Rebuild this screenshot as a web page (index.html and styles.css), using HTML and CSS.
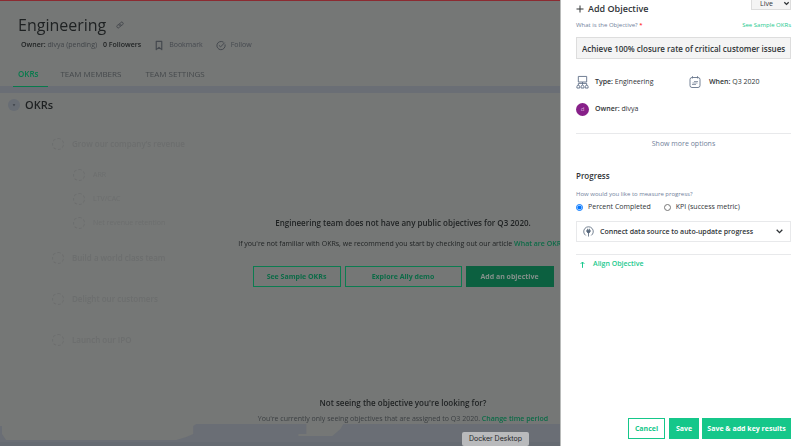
FILE: index.html
```html
<!DOCTYPE html>
<html lang="en">
<head>
<meta charset="utf-8">
<title>Engineering OKRs</title>
<link rel="stylesheet" href="styles.css">
</head>
<body>
<div class="page">
  <header class="team">
    <div class="team-title">
      <h1>Engineering</h1>
      <svg class="link-icon" viewBox="0 0 16 16" fill="none" stroke="currentColor" stroke-width="1.6" stroke-linecap="round"><path d="M7 10a3 3 0 0 1-.5-4L9.500 3a2.700 2.700 0 0 1 4 3.800L11 9.500M9 6a3 3 0 0 1 .5 4L6.500 13a2.700 2.700 0 0 1-4-3.800L5 6.500"/></svg>
    </div>
    <div class="meta">
      <span class="owner"><b>Owner:</b> divya (pending)</span>
      <b class="followers">0 Followers</b>
      <button class="meta-action" type="button"><svg viewBox="0 0 10 12" fill="none" stroke="currentColor" stroke-width="1.300" stroke-linejoin="round"><path d="M2 1.500h6v9L5 8l-3 2.500z"/></svg>Bookmark</button>
      <button class="meta-action" type="button"><svg viewBox="0 0 12 12" fill="none" stroke="currentColor" stroke-width="1.200" stroke-linecap="round"><path d="M11 5.200A5 5 0 1 1 8.700 1.800M3.800 6l1.700 1.700L10 3"/></svg>Follow</button>
    </div>
    <nav class="tabs">
      <a class="tab active" href="#okrs">OKRs</a>
      <a class="tab" href="#members">TEAM MEMBERS</a>
      <a class="tab" href="#settings">TEAM SETTINGS</a>
    </nav>
  </header>
  <main id="okrs">
    <div class="section-head">
      <button class="toggle" type="button" aria-label="Collapse OKRs"><svg viewBox="0 0 6 6"><path d="M1 2h4L3 5z" fill="currentColor"/></svg></button>
      <h2>OKRs</h2>
    </div>
    <div class="stack">
      <ul class="tree">
        <li class="goal"><i class="target"></i>Grow our company’s revenue</li>
        <li class="child first"><i class="target"></i>ARR</li>
        <li class="child"><i class="target"></i>LTV/CAC</li>
        <li class="child last"><i class="target"></i>Net revenue retention</li>
        <li class="goal"><i class="target"></i>Build a world class team</li>
        <li class="goal"><i class="target"></i>Delight our customers</li>
        <li class="goal"><i class="target"></i>Launch our IPO</li>
      </ul>
      <section class="empty">
        <h3>Engineering team does not have any public objectives for Q3 2020.</h3>
        <p class="hint">If you're not familiar with OKRs, we recommend you start by checking out our article <a href="#about">What are OKRs?</a></p>
        <div class="actions">
          <button class="ghost" type="button">See Sample OKRs</button>
          <button class="ghost wide" type="button">Explore Ally demo</button>
          <button class="solid" type="button">Add an objective</button>
        </div>
        <h3>Not seeing the objective you're looking for?</h3>
        <p class="period">You're currently only seeing objectives that are assigned to Q3 2020. <a href="#period">Change time period</a></p>
      </section>
    </div>
  </main>
  <svg class="floor" viewBox="0 0 560 22" preserveAspectRatio="none"><path d="M0 2h2v8l4 6h170l10-3 7-3V2l3-2h110v10h-8v2h34l8-7 3-5h221v22H0z" fill="#6a6e75"/><path d="M0 18h560v4H0z" fill="#666b72"/></svg>
</div>

<aside class="drawer">
  <form class="form">
    <div class="drawer-head">
      <h2><svg viewBox="0 0 8 8" stroke="currentColor" stroke-width="1"><path d="M4 .5v7M.5 4h7"/></svg>Add Objective</h2>
      <div class="select-wrap">
        <select aria-label="Status"><option>Live</option></select>
        <svg viewBox="0 0 8 8" fill="none" stroke="currentColor" stroke-width="1.500"><path d="M1.500 2.500L4 5l2.500-2.500"/></svg>
      </div>
    </div>
    <div class="label-row">
      <label for="objective">What is the Objective? <b class="req">*</b></label>
      <a href="#samples">See Sample OKRs</a>
    </div>
    <input class="objective" id="objective" type="text" value="Achieve 100% closure rate of critical customer issues">
    <div class="facts">
      <div class="fact"><svg viewBox="0 0 14 14" fill="none" stroke="currentColor" stroke-width="1"><path d="M2.500 1h9v6h-9zM7 7v3M2.500 10.500V8.500h9v2"/><path d="M1 13.500V12q0-1.500 1.500-1.500T4 12v1.500zM5.500 13.500V12q0-1.500 1.500-1.500T8.500 12v1.500zM10 13.500V12q0-1.500 1.500-1.500T13 12v1.500z"/></svg><span><b>Type:</b> Engineering</span></div>
      <div class="fact"><svg class="calendar" viewBox="0 0 12 12" fill="none" stroke="currentColor" stroke-width=".9"><rect x="1" y="1.500" width="10" height="10" rx="2"/><path d="M3.500 0v2.500M8.500 0v2.500M5 5.500h4M3.500 7h5M3 8.500h4" stroke-width=".7"/></svg><span><b>When:</b> Q3 2020</span></div>
      <div class="fact"><span class="avatar">d</span><span><b>Owner:</b> divya</span></div>
    </div>
    <button class="more" type="button">Show more options</button>
    <h3>Progress</h3>
    <fieldset>
      <legend>How would you like to measure progress?</legend>
      <div class="radios">
        <label><input type="radio" name="measure" checked>Percent Completed</label>
        <label><input type="radio" name="measure">KPI (success metric)</label>
      </div>
    </fieldset>
    <button class="connect" type="button">
      <svg viewBox="0 0 12 12" fill="none" stroke="currentColor" stroke-width=".9"><path d="M3 10.300A5.200 5.200 0 1 1 9 10.300"/><path d="M4.200 4.500h3.600v1.800L6.500 7.500h-1L4.200 6.300z" fill="currentColor"/><path d="M5 3v2M7 3v2M6 7v4.500"/></svg>
      <span>Connect data source to auto-update progress</span>
      <svg class="chevron" viewBox="0 0 8 8" fill="none" stroke="currentColor" stroke-width="1.200"><path d="M1.500 2.500L4 5l2.500-2.500"/></svg>
    </button>
    <button class="align" type="button"><svg viewBox="0 0 6 8" fill="none" stroke="currentColor" stroke-width="1.200"><path d="M3 8V1M.8 3.300L3 1l2.200 2.300"/></svg>Align Objective</button>
  </form>
  <footer>
    <button class="cancel" type="button">Cancel</button>
    <button class="save" type="button">Save</button>
    <button class="save save-add" type="button">Save &amp; add key results</button>
  </footer>
</aside>
<div class="tooltip" role="tooltip">Docker Desktop</div>
</body>
</html>
```
FILE: styles.css
```css
* { box-sizing: border-box; }
body {
  margin: 0;
  min-height: 100vh;
  overflow: hidden;
  background: #757776;
  color: #1e2122;
  font: 7px/12px "Open Sans", sans-serif;
}
h1, h2, h3, p, ul, fieldset, legend { margin: 0; padding: 0; border: 0; }
button, input, select { font: inherit; color: inherit; margin: 0; }
button { padding: 0; border: 0; background: none; }
a { text-decoration: none; }
svg { display: block; flex: none; }
b, h2, h3 { font-weight: 600; }

/* Team page behind the drawer */
.page { min-height: 100vh; border-top: 1px solid #8b2b31; }
.team { border-bottom: 7px solid #6a6e75; }
.team-title { display: flex; align-items: center; gap: 10px; padding: 12px 18px 0; }
h1 { font-size: 16px; line-height: 24px; font-weight: 500; }
.link-icon { width: 8px; height: 8px; color: #3c4046; }
.meta { display: flex; align-items: center; height: 16px; padding-left: 21px; color: #414549; }
.meta b { color: #1e2122; }
.followers { margin-left: 6px; }
.meta-action { display: flex; align-items: center; gap: 5px; margin-left: 13px; color: #45494f; }
.meta-action svg { width: 10px; height: 11px; }
.tabs { display: flex; padding-left: 13px; margin-top: 10px; }
.tab { padding: 5px 12px 6px; color: #45494c; font-size: 8px; line-height: 12px; }
.tab.active { color: #087a4c; font-weight: 600; padding: 5px 10px 6px 5px; box-shadow: 0 1px #087a4c; }
.section-head { display: flex; align-items: center; gap: 5px; height: 24px; padding-left: 8px; }
.section-head h2 { font-size: 11px; line-height: 16px; }
.toggle { display: grid; place-items: center; width: 12px; height: 12px; border-radius: 50%; background: #686d74; color: #3a3e44; }
.toggle svg { width: 4px; height: 4px; }
.stack { display: grid; }
.stack > * { grid-area: 1 / 1; }
.tree { list-style: none; padding: 18px 0 0 52px; color: #6c6e6e; font-weight: 600; }
.tree li { display: flex; align-items: center; height: 18px; gap: 8px; }
.tree .goal { margin-bottom: 23px; font-size: 8px; }
.tree .child { margin: 0 0 6px 21px; font-weight: 400; }
.tree .first { margin-top: -10px; }
.tree .last { margin-bottom: 17px; }
.target { width: 12px; height: 12px; border: 1px dashed #6c6e6e; border-radius: 50%; }
.empty { padding: 96px 0 0 5px; text-align: center; white-space: nowrap; }
.empty h3 { font-size: 8px; line-height: 20px; }
.hint { margin-top: 5px; font-weight: 500; }
.empty a { color: #0c6b47; font-weight: 600; }
.actions { display: flex; justify-content: center; gap: 4px; margin: 16px 0 106px; }
.actions button { width: 88px; height: 21px; border: 1px solid #0c7c50; font-weight: 700; color: #0c6b47; }
.actions .wide { width: 117px; }
.actions .solid { background: #0c6040; border-color: #0c6040; color: #85908b; }
.period { color: #3b3f42; line-height: 12px; }
.floor { position: fixed; left: 0; bottom: 0; width: 70%; height: 22px; z-index: -1; }

/* Drawer */
.drawer {
  position: fixed;
  top: 0; right: 0; bottom: 0;
  width: 241px;
  display: flex;
  flex-direction: column;
  justify-content: space-between;
  padding: 0 10px 7px 15px;
  border-left: 1px solid #b9bbba;
  background: #fff;
  color: #303437;
}
.drawer-head { display: flex; justify-content: space-between; height: 18px; }
.drawer-head h2 { display: flex; align-items: center; gap: 4px; font-size: 9px; line-height: 18px; }
.drawer-head h2 svg { width: 8px; height: 8px; }
.select-wrap { position: relative; height: 10px; }
select { display: block; appearance: none; width: 40px; height: 10px; padding: 0 8px 3px; border: 1px solid #ddd; border-top: 0; border-radius: 0; background: #f4f4f4; line-height: 8px; }
.select-wrap svg { position: absolute; right: 1px; top: 0; width: 7px; height: 7px; }
.label-row { display: flex; justify-content: space-between; font-size: 6px; line-height: 14px; color: #71819b; }
.label-row a { color: #1bc98e; }
.req { color: #f22; }
.objective { display: block; width: 100%; height: 22px; margin-top: 5px; padding: 0 4px 0 5px; border: 1px solid #ddd; border-radius: 0; background: #f4f4f4; font-size: 8px; font-weight: 600; }
.facts { display: grid; grid-template-columns: 113px 1fr; row-gap: 13px; padding: 16px 0 17px; border-bottom: 1px solid #e8e9eb; }
.fact { display: flex; align-items: center; gap: 6px; height: 14px; }
.fact svg { width: 13px; height: 14px; color: #65748a; }
.fact .calendar { width: 12px; height: 12px; margin-right: 2px; }
.avatar { display: grid; place-items: center; width: 13px; height: 13px; border-radius: 50%; background: #872089; color: #d9a9da; font-size: 6px; }
.more { display: block; width: 100%; margin-top: 4px; color: #71819b; }
.form h3 { margin-top: 19px; font-size: 8px; line-height: 14px; }
legend { padding-top: 5px; font-size: 6px; line-height: 12px; color: #71819b; }
.radios { display: flex; gap: 13px; height: 14px; }
.radios label { display: flex; align-items: center; gap: 5px; }
.radios input { width: 7px; height: 7px; }
.connect { display: flex; align-items: center; gap: 6px; width: 100%; height: 21px; margin-top: 7px; padding: 0 6px; border: 1px solid #e8e9eb; font-weight: 600; }
.connect svg { width: 11px; height: 11px; color: #59687c; }
.connect .chevron { width: 9px; height: 9px; margin-left: auto; color: #303437; }
.align { display: flex; align-items: center; gap: 8px; width: 100%; margin-top: 12px; padding: 3px 4px; border-top: 1px solid #e8e9eb; color: #1bc98e; font-weight: 600; }
.align svg { width: 5px; height: 7px; }
footer { display: flex; justify-content: flex-end; gap: 3px; }
footer button { height: 21px; border: 1px solid #15c78a; font-weight: 700; white-space: nowrap; }
.cancel { width: 37px; margin-right: 1px; color: #15c78a; }
.save { width: 30px; background: #15c78a; color: #fff; }
.save-add { width: 89px; }
.tooltip { position: fixed; left: 462px; bottom: 0; padding: 1px 7px 0; height: 14px; border-radius: 2px; background: #b9babc; color: #242628; font: 7px/12px Inter, sans-serif; }
```
